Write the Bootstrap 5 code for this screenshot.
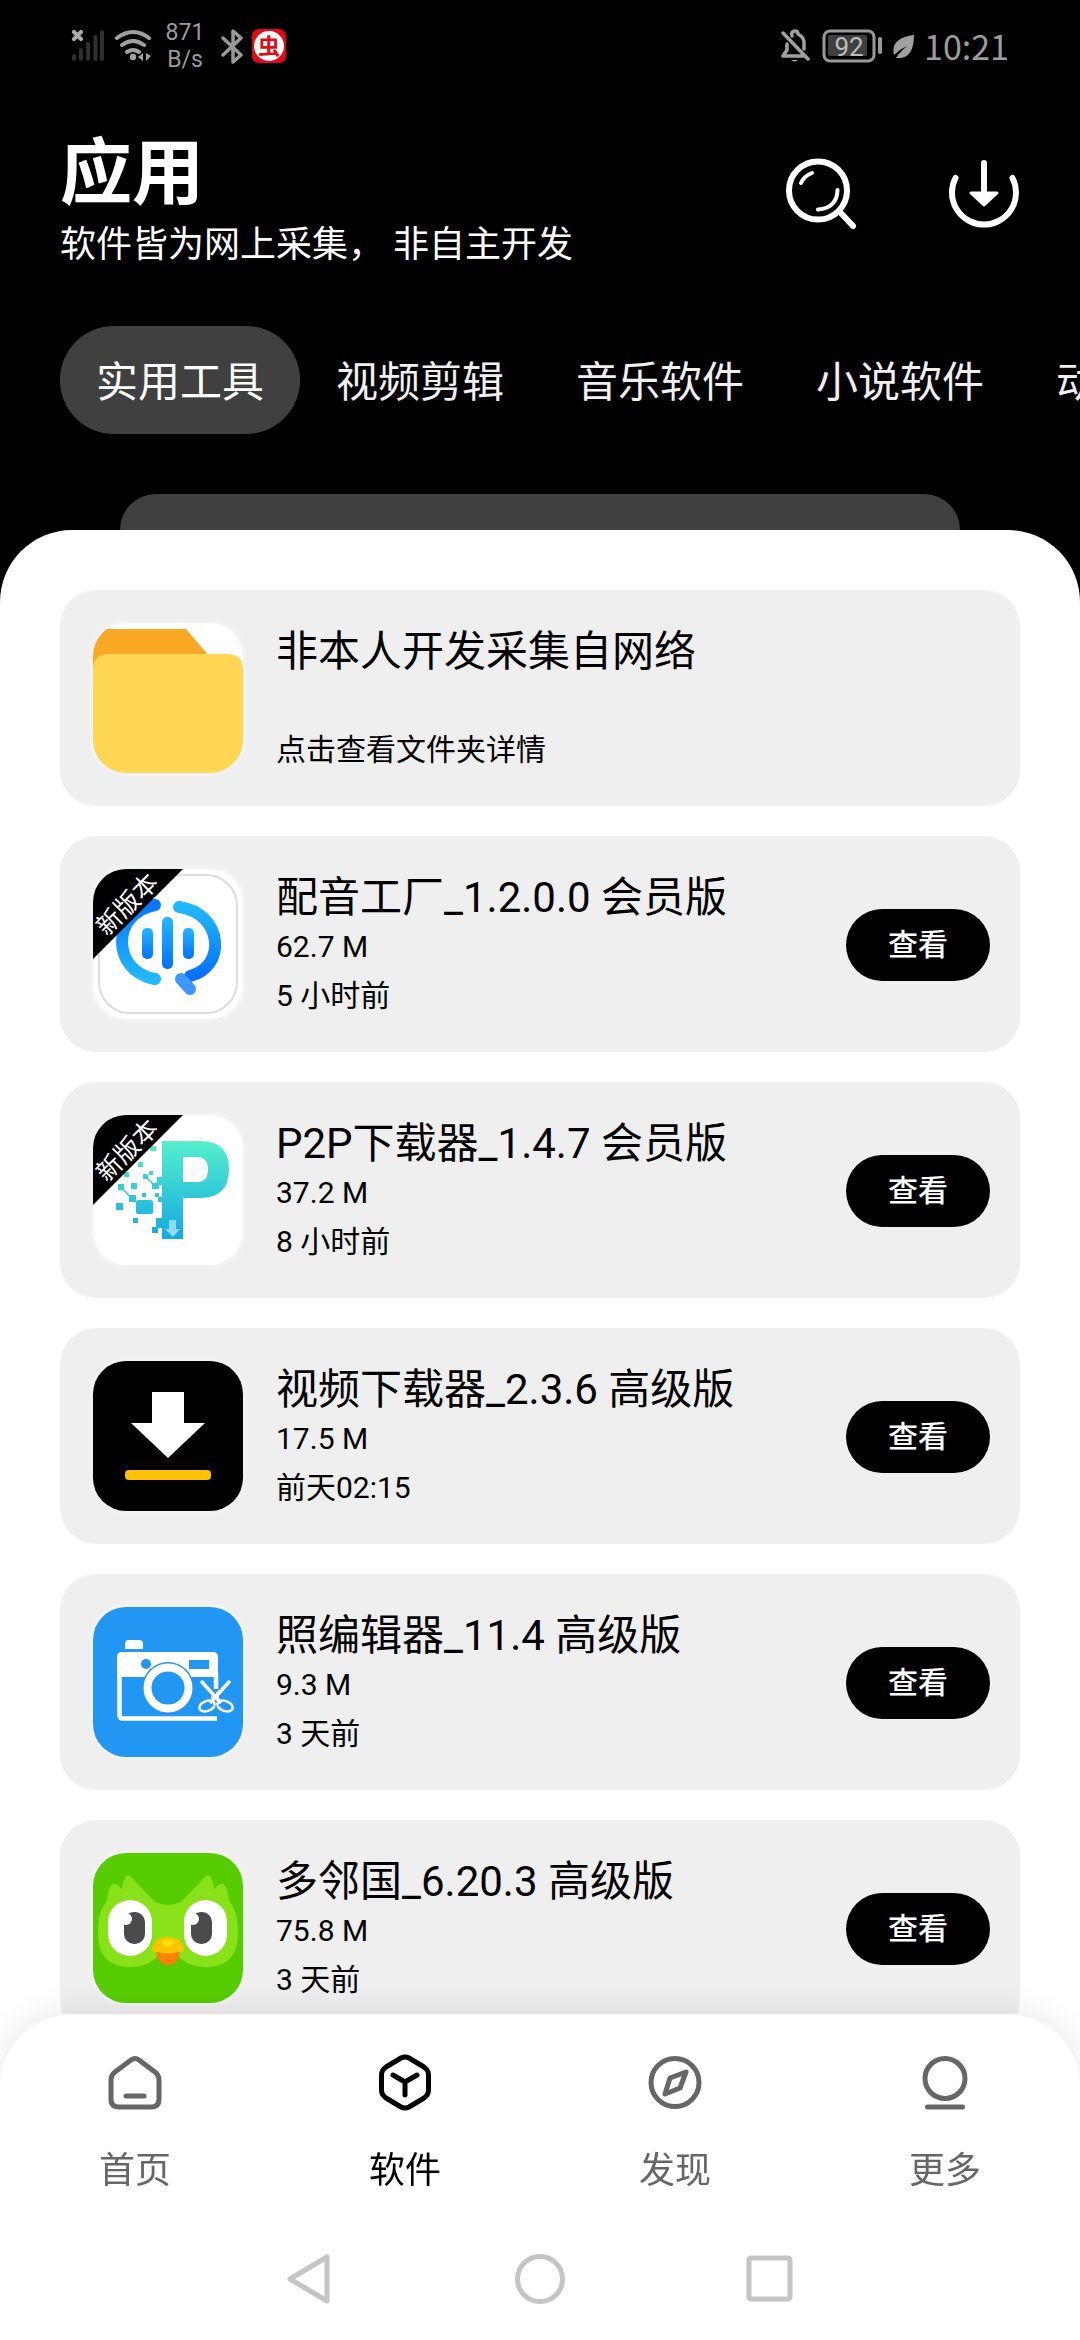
<!DOCTYPE html>
<html lang="zh-CN">
<head>
<meta charset="utf-8">
<meta name="viewport" content="width=device-width, initial-scale=1">
<title>应用</title>
<link href="https://cdn.jsdelivr.net/npm/bootstrap@5.3.0/dist/css/bootstrap.min.css" rel="stylesheet">
<style>
  body { font-family: Roboto, "Noto Sans CJK SC", sans-serif; background: #000; color: #000; }
  svg { display: block; flex: none; }
  .status-bar { height: 92px; padding: 0 71px 0 70px; color: #9b9b9b; }
  .net-rate { font-size: 23px; line-height: 27px; width: 40px; margin-left: 11px; }
  .clock { font-family: "Noto Sans CJK SC", sans-serif; font-size: 34px; line-height: 40px; }
  .page-head { padding: 40px 60px 52px; }
  .page-title { font-size: 72px; line-height: 84px; }
  .page-sub { font-size: 36px; line-height: 58px; }
  .head-tools { gap: 90px; padding-top: 25px; }
  .cat-tabs { padding-left: 60px; margin-bottom: 60px; }
  .cat-tabs .nav-link { font-size: 42px; line-height: 60px; padding: 27px 36px 21px; border-radius: 54px; color: #f0f0f0; white-space: nowrap; flex: none; }
  .cat-tabs .nav-link.active { background: #404040; color: #fff; }
  .peek { height: 36px; margin: 0 120px; background: #404040; border-radius: 36px 36px 0 0; }
  .sheet { padding: 60px 60px 280px; border-radius: 72px 72px 0 0; }
  .app-list { gap: 30px; }
  .app-item { min-height: 216px; padding: 33px 30px 32px 33px; gap: 33px; border-radius: 36px; background: #efefef; }
  .app-icon { width: 150px; height: 150px; border-radius: 33px; box-shadow: 0 0 0 3px #f2f2f2; overflow: hidden; }
  .app-text { padding-top: 4px; }
  .app-name { font-size: 42px; line-height: 49px; }
  .app-meta { font-size: 30px; line-height: 49px; }
  .btn-view { width: 144px; height: 72px; font-size: 30px; line-height: 36px; font-weight: 500; }
  .bottom-nav { border-radius: 72px 72px 0 0; box-shadow: 0 0 36px rgba(0,0,0,.1); padding-top: 38px; }
  .tab-link { gap: 32px; font-size: 36px; line-height: 54px; color: #666; }
  .tab-link.active { color: #000; }
  .sys-bar { gap: 171px; padding: 51px 0 31px; color: #c4c4c4; }
</style>
<script src="https://cdn.jsdelivr.net/npm/bootstrap@5.3.0/dist/js/bootstrap.bundle.min.js"></script>
</head>
<body>
<div class="d-flex flex-column min-vh-100">

  <div class="status-bar d-flex align-items-center justify-content-between">
    <div class="d-flex align-items-center">
      <svg width="36" height="32" viewBox="70 30 36 32"><g stroke="#303030" stroke-width="4" stroke-linecap="round"><path d="M74 56v3M81 50v9M88 44v15M95.500 37v22M102 32v27"/></g><path d="M74 32l7 7M81 32l-7 7" stroke="#aaa" stroke-width="4" stroke-linecap="round"/></svg>
      <svg class="ms-2" width="40" height="34" viewBox="113 29 40 34" fill="none" stroke="#a0a0a0" stroke-width="4" stroke-linecap="round"><path d="M116 38q16-12 32 0M121 45q11-8 22 0M126 52q6-4 12 0"/><circle cx="132" cy="57" r="3.200" fill="#a0a0a0" stroke="none"/><path d="M142 53v8l-5-4zM145 53l5 3-5 5z" fill="#a0a0a0" stroke="none"/></svg>
      <div class="net-rate text-center">871<br>B/s</div>
      <svg class="ms-3" width="22" height="36" viewBox="219 27 22 36" fill="none" stroke="#999" stroke-width="3.500" stroke-linejoin="round" stroke-linecap="round"><path d="M221 37l18 17-8 7V30l8 7-18 17"/></svg>
      <svg class="ms-2" width="36" height="36" viewBox="0 0 36 36"><rect x="1" y="1" width="34" height="34" rx="7" fill="#e20a17"/><circle cx="18" cy="18" r="15" fill="#fff"/><text x="18" y="26" text-anchor="middle" font-size="22" font-weight="700" fill="#e20a17" font-family="Noto Sans CJK SC, sans-serif">虫</text></svg>
    </div>
    <div class="d-flex align-items-center">
      <svg width="30" height="34" viewBox="782 29 30 34" fill="none" stroke="#a0a0a0" stroke-width="3.500" stroke-linecap="round" stroke-linejoin="round"><path d="M785 33l25 26M789 44v6l-4 6h22M794 36q-1-5 3-5 3 0 3 3 6 3 6 9v6"/><path d="M793 60h7q-3.500 3-7 0z" fill="#a0a0a0" stroke="none"/></svg>
      <svg class="ms-2" width="66" height="34" viewBox="820 29 66 34"><rect x="826" y="31" width="50" height="30" rx="6" fill="none" stroke="#999" stroke-width="3"/><rect x="830" y="35" width="39" height="21" rx="2" fill="#404040"/><rect x="880" y="37" width="4" height="17" rx="2" fill="#999"/><text x="851" y="56" text-anchor="middle" font-size="26" fill="#bdbdbd">92</text></svg>
      <svg class="ms-2" width="24" height="24" viewBox="893 34 24 24"><path d="M915 35q0 25-18 23l2-3q4-5 9-9-7 3-13 9-4-17 20-20z" fill="#a0a0a0"/></svg>
      <div class="clock ms-2">10:21</div>
    </div>
  </div>

  <header class="page-head d-flex align-items-start justify-content-between text-white">
    <div>
      <h1 class="page-title fw-bold m-0">应用</h1>
      <p class="page-sub m-0">软件皆为网上采集， 非自主开发</p>
    </div>
    <div class="head-tools d-flex">
      <button type="button" class="btn p-0 border-0 text-white" aria-label="搜索">
        <svg width="72" height="72" viewBox="0 0 72 72" fill="none" stroke="currentColor" stroke-width="6" stroke-linecap="round"><circle cx="32" cy="33.500" r="29"/><path d="M53 54l14 15"/><path d="M15 26q3-7 11-10M51.500 33Q51 51 32 52.500" stroke-width="4"/></svg>
      </button>
      <button type="button" class="btn p-0 border-0 text-white" aria-label="下载">
        <svg width="72" height="72" viewBox="0 0 72 72" fill="none" stroke="currentColor" stroke-width="6" stroke-linecap="round" stroke-linejoin="round"><path d="M7.500 21a32 32 0 1 0 57 0M36 6v34"/><path d="M23 36h26L36 48z" fill="currentColor" stroke-width="3"/></svg>
      </button>
    </div>
  </header>

  <nav class="cat-tabs nav nav-pills flex-nowrap overflow-hidden" aria-label="分类">
    <button type="button" class="nav-link active">实用工具</button>
    <button type="button" class="nav-link">视频剪辑</button>
    <button type="button" class="nav-link">音乐软件</button>
    <button type="button" class="nav-link">小说软件</button>
    <button type="button" class="nav-link">动漫软件</button>
  </nav>

  <div class="peek"></div>

  <main class="sheet bg-white flex-grow-1">
    <ul class="app-list list-unstyled d-flex flex-column m-0">
      <li>
        <a href="#" class="app-item d-flex text-reset text-decoration-none">
          <svg class="app-icon" viewBox="0 0 150 150"><path fill="#fff" d="M0 0h150v150H0z"/><path fill="#f9a825" d="M0 20Q0 6 14 6h79l24 28v20H0z"/><path fill="#ffd554" d="M0 150V47q0-16 16-16h118q16 0 16 16v103z"/></svg>
          <div class="app-text d-flex flex-column">
            <div class="app-name">非本人开发采集自网络</div>
            <div class="app-meta mt-auto">点击查看文件夹详情</div>
          </div>
        </a>
      </li>
      <li class="app-item d-flex align-items-start">
        <svg class="app-icon" viewBox="0 0 150 150">
          <defs><linearGradient id="voiceL" x1="0" y1="0" x2="0" y2="1"><stop offset="0" stop-color="#0876ff"/><stop offset="1" stop-color="#22b8ff"/></linearGradient><linearGradient id="voiceR" x1="0" y1="0" x2="0" y2="1"><stop offset="0" stop-color="#22b8ff"/><stop offset="1" stop-color="#0670fa"/></linearGradient></defs>
          <path fill="#fff" d="M0 0h150v150H0z"/><rect x="6" y="6" width="138" height="138" rx="31" fill="none" stroke="#dcdcdc" stroke-width="2"/>
          <g fill="none" stroke-width="12" stroke-linecap="round"><path d="M62 36C18 44 18 102 62 110" stroke="url(#voiceL)"/><path d="M86 38C130 44 134 98 97 107" stroke="url(#voiceR)"/><path d="M88 110l9 10" stroke="#3c98ff"/></g>
          <g fill="url(#voiceR)"><rect x="49" y="59" width="11" height="31" rx="5"/><rect x="69" y="48" width="11" height="52" rx="5"/><rect x="90" y="59" width="11" height="31" rx="5"/></g>
          <path d="M0 0h90L0 90z"/><text x="0" y="9" text-anchor="middle" font-size="25" fill="#fff" transform="translate(34 35) rotate(-45)">新版本</text>
        </svg>
        <div class="app-text flex-grow-1"><div class="app-name">配音工厂_1.2.0.0 会员版</div><div class="app-meta">62.7 M</div><div class="app-meta">5 小时前</div></div>
        <button type="button" class="btn btn-view rounded-pill text-bg-dark bg-black border-0 p-0 align-self-center">查看</button>
      </li>
      <li class="app-item d-flex align-items-start">
        <svg class="app-icon" viewBox="0 0 150 150">
          <defs><linearGradient id="p2p" gradientUnits="userSpaceOnUse" x1="0" y1="26" x2="0" y2="124"><stop offset="0" stop-color="#55efcb"/><stop offset="1" stop-color="#14a8e2"/></linearGradient></defs>
          <path fill="#fff" d="M0 0h150v150H0z"/>
          <g fill="url(#p2p)"><path fill-rule="evenodd" d="M69 26h38q29 0 29 28 0 29-29 29H90v41H69zM90 42v25h14q11 0 11-12.500T104 42z"/>
          <rect x="43" y="85" width="17" height="14" rx="2"/><rect x="23" y="88" width="7" height="7"/><rect x="25" y="69" width="6" height="6"/><rect x="38" y="68" width="6" height="6"/><rect x="36" y="80" width="7" height="7"/><rect x="59" y="68" width="7" height="6"/><rect x="64" y="62" width="6" height="8"/><rect x="50" y="59" width="5" height="5"/><rect x="56" y="56" width="4" height="4"/><rect x="45" y="47" width="5" height="5"/><rect x="57" y="31" width="6" height="5"/><rect x="31" y="57" width="5" height="5"/><rect x="40" y="103" width="5" height="5"/><rect x="59" y="112" width="6" height="6"/><rect x="63" y="103" width="7" height="10"/><rect x="49" y="78" width="4" height="4"/><rect x="62" y="78" width="4" height="4"/><rect x="65" y="82" width="5" height="5"/></g>
          <path d="M28 72l11 12M52 61l10 10" stroke="#35c8d6" stroke-width="1.500"/>
          <path d="M76 105h7v9h4l-7 8-8-8h4z" fill="#8fdcf2"/>
          <path d="M0 0h90L0 90z"/><text x="0" y="9" text-anchor="middle" font-size="25" fill="#fff" transform="translate(34 35) rotate(-45)">新版本</text>
        </svg>
        <div class="app-text flex-grow-1"><div class="app-name">P2P下载器_1.4.7 会员版</div><div class="app-meta">37.2 M</div><div class="app-meta">8 小时前</div></div>
        <button type="button" class="btn btn-view rounded-pill text-bg-dark bg-black border-0 p-0 align-self-center">查看</button>
      </li>
      <li class="app-item d-flex align-items-start">
        <svg class="app-icon" viewBox="0 0 150 150"><path d="M0 0h150v150H0z"/><path fill="#fff" d="M59 31h32v31h21L75 97 38 62h21z"/><rect x="32" y="109" width="86" height="10" rx="4" fill="#ffc107"/></svg>
        <div class="app-text flex-grow-1"><div class="app-name">视频下载器_2.3.6 高级版</div><div class="app-meta">17.5 M</div><div class="app-meta">前天02:15</div></div>
        <button type="button" class="btn btn-view rounded-pill text-bg-dark bg-black border-0 p-0 align-self-center">查看</button>
      </li>
      <li class="app-item d-flex align-items-start">
        <svg class="app-icon" viewBox="0 0 150 150">
          <path fill="#2196f3" d="M0 0h150v150H0z"/>
          <path fill="#fff" d="M32 42v-5q0-4 4-4h10q4 0 4 4v5zM24 70V50q0-5 5-5h91q5 0 5 5v20z"/>
          <path d="M26.500 60v48q0 3.500 3.500 3.500h94M123 66v16" fill="none" stroke="#fff" stroke-width="4.500"/>
          <circle cx="53" cy="57" r="5" fill="#2196f3"/><path fill="#2196f3" d="M96 53h20v9H96z"/>
          <circle cx="75" cy="81" r="26" fill="#2196f3"/><circle cx="75" cy="81" r="20.500" fill="none" stroke="#fff" stroke-width="8"/>
          <path d="M107 73l16 21 4-4zM138 73l-17 21-4-4z" fill="#fff" stroke="#2196f3" stroke-width="1"/>
          <path d="M109 75l18 20M136 75l-18 20" stroke="#fff" stroke-width="3.500" stroke-linecap="round"/>
          <g fill="none" stroke="#fff" stroke-width="2.500"><ellipse cx="114" cy="99" rx="8" ry="5" transform="rotate(-20 114 99)"/><ellipse cx="132" cy="99" rx="8" ry="5" transform="rotate(20 132 99)"/></g>
        </svg>
        <div class="app-text flex-grow-1"><div class="app-name">照编辑器_11.4 高级版</div><div class="app-meta">9.3 M</div><div class="app-meta">3 天前</div></div>
        <button type="button" class="btn btn-view rounded-pill text-bg-dark bg-black border-0 p-0 align-self-center">查看</button>
      </li>
      <li class="app-item d-flex align-items-start">
        <svg class="app-icon" viewBox="0 0 150 150">
          <path fill="#58cc02" d="M0 0h150v150H0z"/>
          <path fill="#89e219" d="M75 52Q64 52 58 45L38 24q-4-4-6 1-3 5-3 11-6-6-9-5-5 2-6 17Q5 57 5 80q0 34 32 34 21 0 31-15h14q10 15 31 15 32 0 32-34 0-23-9-32-1-15-6-17-3-1-9 5 0-6-3-11-2-5-6-1L92 45Q86 52 75 52z"/>
          <rect x="15" y="47" width="44" height="56" rx="22" fill="#fff"/><rect x="91" y="47" width="43" height="56" rx="21.500" fill="#fff"/>
          <g fill="#4b4b4b"><rect x="31" y="59" width="21" height="32" rx="10"/><rect x="98" y="59" width="21" height="32" rx="10"/></g>
          <g fill="#fff"><circle cx="33" cy="66" r="6"/><circle cx="100" cy="66" r="6"/></g>
          <path fill="#f78206" d="M63 95h24q0 17-12 17T63 95z"/><path fill="#ffc200" d="M59 96q3-12 16-12t16 12q0 4-7 3-9 3-18 0-7 1-7-3z"/><ellipse cx="75" cy="90" rx="6" ry="4" fill="#ffdb00"/>
        </svg>
        <div class="app-text flex-grow-1"><div class="app-name">多邻国_6.20.3 高级版</div><div class="app-meta">75.8 M</div><div class="app-meta">3 天前</div></div>
        <button type="button" class="btn btn-view rounded-pill text-bg-dark bg-black border-0 p-0 align-self-center">查看</button>
      </li>
    </ul>
  </main>
</div>

<footer class="bottom-nav fixed-bottom bg-white">
  <nav class="row g-0" aria-label="主导航">
    <a href="#" class="tab-link col d-flex flex-column align-items-center text-decoration-none">
      <svg width="60" height="60" viewBox="0 0 60 60" fill="none" stroke="currentColor" stroke-width="5" stroke-linecap="round"><path d="M6 28q0-5 4-8L26 8q4-3 8 0l16 12q4 3 4 8v19q0 8-8 8H14q-8 0-8-8zM21 44h18"/></svg>首页</a>
    <a href="#" class="tab-link active col d-flex flex-column align-items-center text-decoration-none" aria-current="page">
      <svg width="60" height="60" viewBox="0 0 60 60" fill="none" stroke="currentColor" stroke-width="5" stroke-linecap="round" stroke-linejoin="round"><path d="M26 6q4-2 8 0l15 9q4.500 3 4.500 8v15q0 5-4.500 8l-15 9q-4 2-8 0l-15-9q-4.500-3-4.500-8V23q0-5 4.500-8zM18 23l12 7 12-7M30 30v13"/></svg>软件</a>
    <a href="#" class="tab-link col d-flex flex-column align-items-center text-decoration-none">
      <svg width="60" height="60" viewBox="0 0 60 60" fill="none" stroke="currentColor" stroke-width="5" stroke-linejoin="round"><circle cx="30" cy="30.500" r="24"/><path d="M41 20l-16 6-5 16 15-6z"/></svg>发现</a>
    <a href="#" class="tab-link col d-flex flex-column align-items-center text-decoration-none">
      <svg width="60" height="60" viewBox="0 0 60 60" fill="none" stroke="currentColor" stroke-width="5" stroke-linecap="round"><circle cx="30" cy="26.500" r="20"/><path d="M12.500 55h35"/></svg>更多</a>
  </nav>
  <div class="sys-bar d-flex justify-content-center">
    <svg width="60" height="60" viewBox="0 0 60 60" fill="none" stroke="currentColor" stroke-width="5" stroke-linejoin="round"><path d="M48 8v44L11 30z"/></svg>
    <svg width="60" height="60" viewBox="0 0 60 60" fill="none" stroke="currentColor" stroke-width="5"><circle cx="30" cy="30" r="22.500"/></svg>
    <svg width="60" height="60" viewBox="0 0 60 60" fill="none" stroke="currentColor" stroke-width="5"><rect x="8" y="9" width="41" height="41" rx="2"/></svg>
  </div>
</footer>
</body>
</html>
